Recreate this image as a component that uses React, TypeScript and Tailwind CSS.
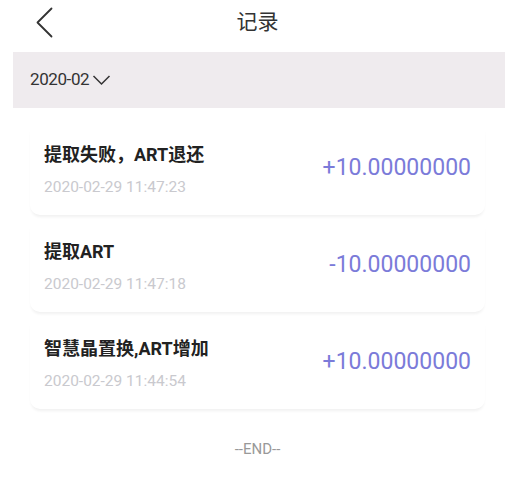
// One record row: what happened, when, and how much
type Record = {
  title: string
  time: string
  amount: string
}

const records: Record[] = [
  { title: '提取失败，ART退还', time: '2020-02-29 11:47:23', amount: '+10.00000000' },
  { title: '提取ART', time: '2020-02-29 11:47:18', amount: '-10.00000000' },
  { title: '智慧晶置换,ART增加', time: '2020-02-29 11:44:54', amount: '+10.00000000' },
]

const font = { fontFamily: 'Roboto, "Noto Sans CJK SC", sans-serif' }

export default function App() {
  return (
    <div className="min-h-[486px] bg-white text-[#222]" style={font}>
      {/* Top bar */}
      <div className="relative h-[44px] flex items-center justify-center">
        <svg
          className="absolute left-[35px] top-[7px] w-[19px] h-[31px]"
          viewBox="0 0 19 31"
          fill="none"
          stroke="#333"
          strokeWidth="1.8"
          strokeLinecap="round"
          strokeLinejoin="round"
        >
          <path d="M16.5 1.5 L2.5 15.5 L16.5 29.5" />
        </svg>
        <span className="text-[21px] leading-none text-[#333]">记录</span>
      </div>

      {/* Month picker */}
      <div className="mt-[8px] ml-[13px] mr-[10px] h-[56px] bg-[#efebee] flex items-center pl-[17px]">
        <span className="text-[17px] text-[#333] tracking-[-0.4px]">2020-02</span>
        <svg
          className="ml-[3px] w-[19px] h-[12px]"
          viewBox="0 0 19 12"
          fill="none"
          stroke="#333"
          strokeWidth="1.5"
        >
          <path d="M1.5 2 L9.5 10 L17.5 2" />
        </svg>
      </div>

      {/* Record list */}
      <div className="mt-[14px] mx-[30px] flex flex-col gap-[4px]">
        {records.map((r, i) => (
          <div
            key={i}
            className="h-[93px] rounded-[10px] bg-white shadow-[0_3px_3px_-1px_rgba(0,0,0,0.06)] px-[14px] flex items-center justify-between"
          >
            <div className="self-start pt-[20px]">
              <div className="text-[18px] leading-[26px] font-bold text-[#222]">{r.title}</div>
              <div className="mt-[8px] text-[15.5px] leading-[22px] text-[#c9c9ce]">{r.time}</div>
            </div>
            <div className="text-[23px] text-[#7b7bd9]">{r.amount}</div>
          </div>
        ))}
      </div>

      <div className="mt-[30px] text-center text-[15px] leading-[20px] text-[#999]">--END--</div>
    </div>
  )
}
